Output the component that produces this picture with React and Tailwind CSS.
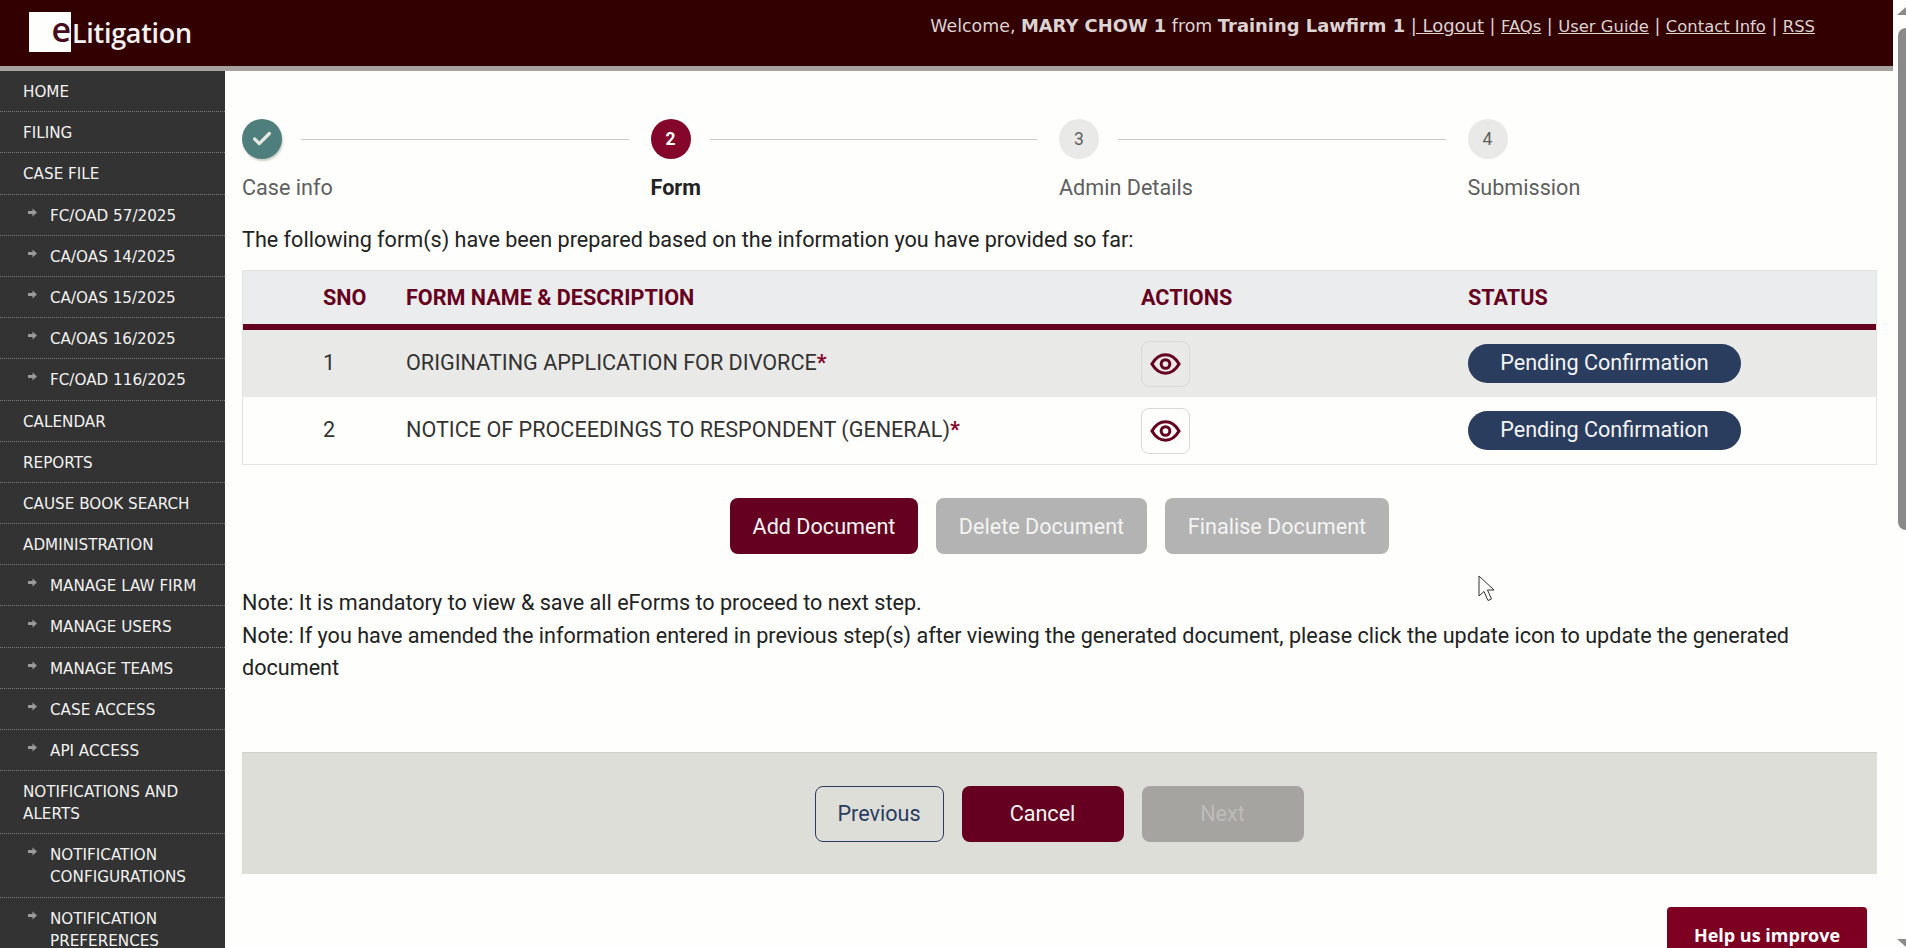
import { Check } from 'lucide-react';

const menu = [
  { label: 'HOME' },
  { label: 'FILING' },
  { label: 'CASE FILE' },
  { label: 'FC/OAD 57/2025', sub: true },
  { label: 'CA/OAS 14/2025', sub: true },
  { label: 'CA/OAS 15/2025', sub: true },
  { label: 'CA/OAS 16/2025', sub: true },
  { label: 'FC/OAD 116/2025', sub: true },
  { label: 'CALENDAR' },
  { label: 'REPORTS' },
  { label: 'CAUSE BOOK SEARCH' },
  { label: 'ADMINISTRATION' },
  { label: 'MANAGE LAW FIRM', sub: true },
  { label: 'MANAGE USERS', sub: true },
  { label: 'MANAGE TEAMS', sub: true },
  { label: 'CASE ACCESS', sub: true },
  { label: 'API ACCESS', sub: true },
  { label: 'NOTIFICATIONS AND ALERTS' },
  { label: 'NOTIFICATION CONFIGURATIONS', sub: true },
  { label: 'NOTIFICATION PREFERENCES', sub: true },
];

const steps = [
  { n: 2, label: 'Form', active: true },
  { n: 3, label: 'Admin Details' },
  { n: 4, label: 'Submission' },
];

const forms = [
  { sno: 1, name: 'ORIGINATING APPLICATION FOR DIVORCE', shaded: true },
  { sno: 2, name: 'NOTICE OF PROCEEDINGS TO RESPONDENT (GENERAL)' },
];

function EyeIcon() {
  return (
    <svg width="33" height="26" viewBox="0 0 30 24" fill="none" stroke="#660020" strokeWidth="2.8">
      <path d="M2.500 12C6 6 10 3.500 15 3.500S24 6 27.500 12C24 18 20 20.500 15 20.500S6 18 2.500 12z" />
      <circle cx="15" cy="12" r="4" />
    </svg>
  );
}

function Sidebar() {
  return (
    <div className="w-[225px] shrink-0 h-full overflow-hidden bg-[#333333] font-['DejaVu_Sans',sans-serif] text-[15.2px] leading-[22px] text-[#f2f2f2]">
      {menu.map((item) => (
        <div
          key={item.label}
          className={`relative border-b border-dotted border-[#7d7d7d] pt-[10px] pb-[8.2px] pr-2 ${item.sub ? 'pl-[50px]' : 'pl-[23px]'}`}
        >
          {item.sub && (
            <svg className="absolute left-[28px] top-[13px]" width="9" height="9" viewBox="0 0 9 9" fill="#9a9a9a">
              <path d="M0 3h4.500V0.500L9 4.500l-4.500 4V6H0z" />
            </svg>
          )}
          {item.label}
        </div>
      ))}
    </div>
  );
}

function Stepper() {
  return (
    <div className="flex">
      <div className="w-[408.5px]">
        <div className="flex items-center gap-[19px] pr-[22px]">
          <div className="w-10 h-10 rounded-full bg-[#4f7f7c] shadow-[1px_2px_2px_#cfcfc8] flex items-center justify-center">
            <Check size={22} strokeWidth={3.5} className="text-[#e8e8e2]" />
          </div>
          <div className="flex-1 h-px bg-[#c9c9c5]" />
        </div>
        <div className="mt-[15px] text-[21.6px] leading-7 text-[#5f5f5f]">Case info</div>
      </div>
      {steps.map((step) => (
        <div key={step.n} className="w-[408.5px]">
          <div className="flex items-center gap-[19px] pr-[22px]">
            <div
              className={`w-10 h-10 rounded-full flex items-center justify-center text-[17.5px] ${step.active ? 'bg-[#85062b] text-white font-bold' : 'bg-[#e9e9e7] text-[#5f5f5f]'}`}
            >
              {step.n}
            </div>
            {step.n !== 4 && <div className="flex-1 h-px bg-[#c9c9c5]" />}
          </div>
          <div className={`mt-[15px] text-[21.6px] leading-7 ${step.active ? 'font-bold text-[#222222]' : 'text-[#5f5f5f]'}`}>
            {step.label}
          </div>
        </div>
      ))}
    </div>
  );
}

function FormsTable() {
  return (
    <div className="mt-4 border border-[#e3e3e0]">
      <div className="flex h-[51px] pt-[2px] items-center bg-[#ebeced] border-b-[6px] border-[#660020] box-content text-[21.6px] font-bold text-[#660020]">
        <div className="w-[80px]" />
        <div className="w-[83px]">SNO</div>
        <div className="w-[735px]">FORM NAME &amp; DESCRIPTION</div>
        <div className="w-[327px]">ACTIONS</div>
        <div>STATUS</div>
      </div>
      {forms.map((f) => (
        <div key={f.sno} className={`flex h-[67px] items-center text-[21.6px] text-[#333333] ${f.shaded ? 'bg-[#e9e9e7]' : 'bg-[#fefefc]'}`}>
          <div className="w-[80px]" />
          <div className="w-[83px]">{f.sno}</div>
          <div className="w-[735px]">
            {f.name}
            <span className="font-bold text-[#85062b]">*</span>
          </div>
          <div className="w-[327px]">
            <div className="w-[49px] h-[46px] rounded-lg border border-[#d9d9d6] flex items-center justify-center">
              <EyeIcon />
            </div>
          </div>
          <div className="w-[273px] h-[39px] rounded-full bg-[#2a3d5f] text-[#f4f4f4] flex items-center justify-center">
            Pending Confirmation
          </div>
        </div>
      ))}
    </div>
  );
}

export default function App() {
  return (
    <div className="relative h-screen overflow-hidden flex bg-[#fefefc] font-['Roboto',sans-serif]">
      <div className="flex-1 min-w-0 flex flex-col">
        <header className="h-[71px] shrink-0 bg-[#330000] border-b-[5px] border-[#a6a29f] flex justify-between pl-[29px] pr-[78px]">
          <div className="flex items-start pt-3">
            <div className="w-[42px] h-10 bg-[#fefefc] flex items-center justify-end">
              <span className="font-['Open_Sans',sans-serif] font-semibold text-[#4a0a1e] text-[34px] leading-10 mb-[6px]">e</span>
            </div>
            <span className="font-['Open_Sans',sans-serif] font-semibold text-[#f2f2f2] text-[27px] leading-9 mt-[3px] ml-[1px] tracking-[-0.3px]">Litigation</span>
          </div>
          <div className="pt-[14px] font-['DejaVu_Sans',sans-serif] text-[17.4px] leading-6 text-[#dcd3d3] whitespace-pre">
            Welcome, <b className="text-[17.9px]">MARY CHOW 1</b> from <b className="text-[17.9px]">Training Lawfirm 1</b> <u className="text-[18px]">| Logout</u> | <u className="text-[16.4px]">FAQs</u> | <u className="text-[16.4px]">User Guide</u> | <u className="text-[16.4px]">Contact Info</u> | <u className="text-[16.4px]">RSS</u>
          </div>
        </header>
        <div className="flex-1 min-h-0 flex">
          <Sidebar />
          <main className="flex-1 min-w-0 pt-12 pl-[17px] pr-4 text-[#222222]">
            <Stepper />
            <p className="mt-6 text-[21.6px] leading-7">The following form(s) have been prepared based on the information you have provided so far:</p>
            <FormsTable />
            <div className="mt-[33px] flex justify-center gap-[18px] text-[21.6px] text-[#f4f4f4]">
              <button className="w-[188px] h-[56px] pt-[2px] rounded-lg bg-[#660020]">Add Document</button>
              <button className="w-[211px] h-[56px] pt-[2px] rounded-lg bg-[#b3b3b3]">Delete Document</button>
              <button className="w-[224px] h-[56px] pt-[2px] rounded-lg bg-[#b3b3b3]">Finalise Document</button>
            </div>
            <div className="mt-[33px] h-[97px] text-[21.6px] leading-[32.5px] text-[#222222]">
              <p>Note: It is mandatory to view &amp; save all eForms to proceed to next step.</p>
              <p>Note: If you have amended the information entered in previous step(s) after viewing the generated document, please click the update icon to update the generated document</p>
            </div>
            <div className="mt-[68px] h-[122px] pr-[1px] bg-[#deded9] border-t border-[#cfcfca] flex justify-center items-center gap-[18px] text-[21.6px]">
              <button className="w-[129px] h-[56px] pt-[2px] rounded-lg border border-[#2a3d5f] text-[#2a3d5f]">Previous</button>
              <button className="w-[162px] h-[56px] pt-[2px] rounded-lg bg-[#660020] text-[#f4f4f4]">Cancel</button>
              <button className="w-[162px] h-[56px] pt-[2px] rounded-lg bg-[#a6a4a0] text-[#bdbcb8]">Next</button>
            </div>
          </main>
        </div>
      </div>
      {/* scrollbar, partly cut off by the window edge */}
      <div className="w-[13px] shrink-0 overflow-hidden flex flex-col">
        <svg className="mt-[7px] ml-1 shrink-0" width="18" height="8" viewBox="0 0 18 8" fill="#8a8a8a">
          <path d="M9 0L18 8H0z" />
        </svg>
        <div className="mt-[13px] ml-[5px] w-4 h-[502px] shrink-0 rounded-lg bg-[#8a8a8a]" />
        <div className="flex-1" />
        <svg className="mb-[1px] ml-1 shrink-0" width="18" height="8" viewBox="0 0 18 8" fill="#8a8a8a">
          <path d="M0 0h18L9 8z" />
        </svg>
      </div>
      <div className="absolute left-[1667px] top-[907px] w-[200px] h-[60px] rounded-t bg-[#7d0022] pt-4 text-center font-['Open_Sans',sans-serif] font-bold text-[18px] leading-6 text-white">
        Help us improve
      </div>
      {/* mouse cursor */}
      <svg className="absolute left-[1478px] top-[575px]" width="18" height="28" viewBox="0 0 18 28" fill="#fefefc" stroke="#333333" strokeWidth="1">
        <path d="M1 1v20l5-4.500 4 9 3.500-1.500-4-9H16z" />
      </svg>
    </div>
  );
}
